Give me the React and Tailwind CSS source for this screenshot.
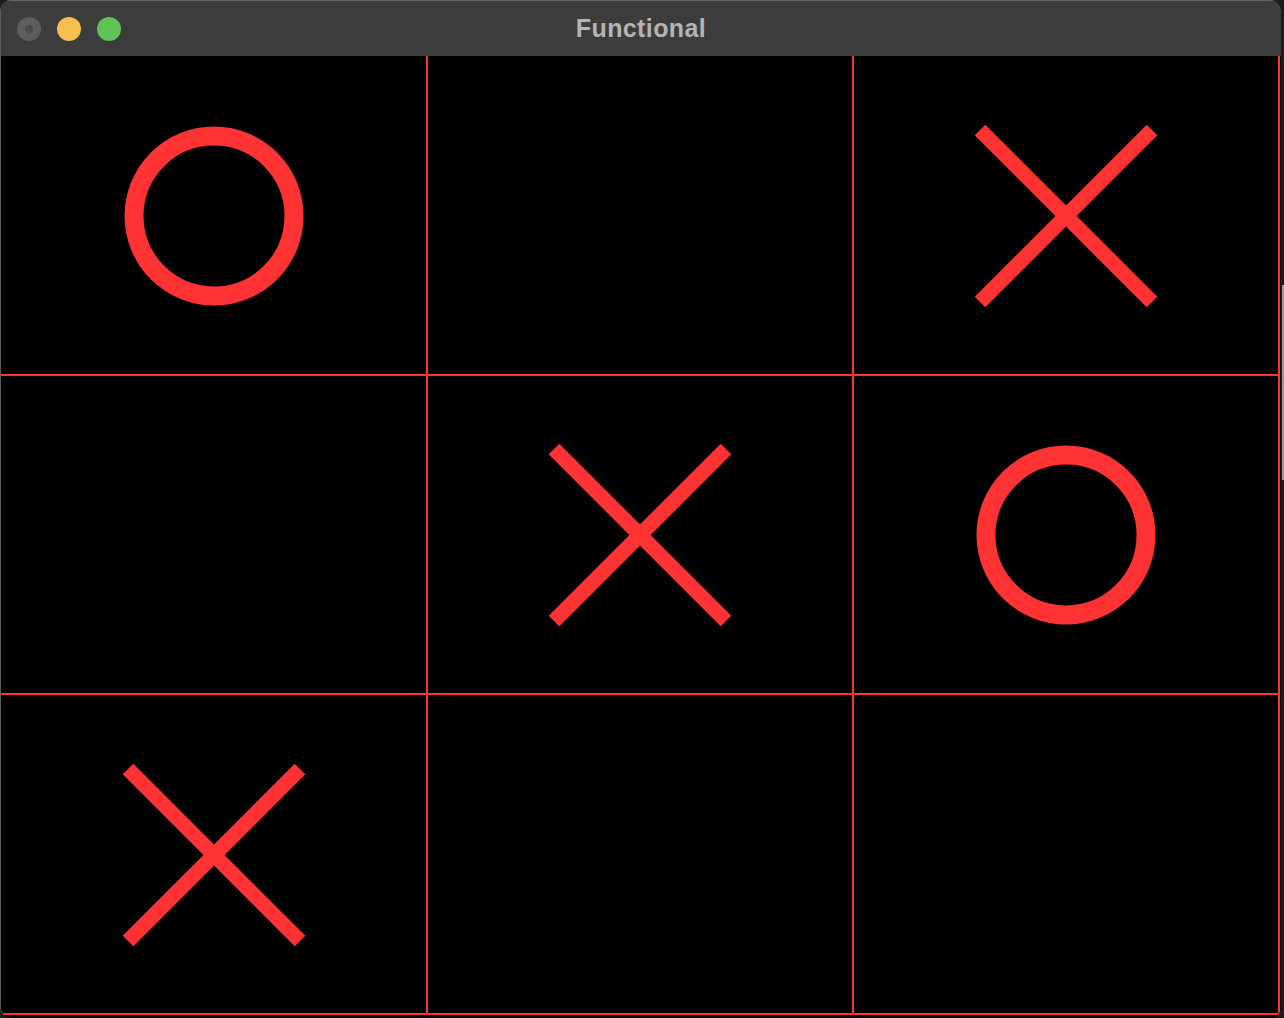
const BOARD = ['O', '', 'X', '', 'X', 'O', 'X', '', '']

function Mark({ value }) {
  if (value === 'O') {
    return (
      <svg width="182" height="182" viewBox="0 0 182 182" className="block">
        <circle cx="91" cy="91" r="80" fill="none" stroke="#ff3333" strokeWidth="19" />
      </svg>
    )
  }
  if (value === 'X') {
    return (
      <svg width="184" height="184" viewBox="0 0 184 184" className="block">
        <g stroke="#ff3333" strokeWidth="15" strokeLinecap="butt">
          <line x1="6" y1="6" x2="178" y2="178" />
          <line x1="178" y1="6" x2="6" y2="178" />
        </g>
      </svg>
    )
  }
  return null
}

function TrafficLights() {
  return (
    <div className="flex items-center gap-4 pl-4">
      <div className="w-6 h-6 rounded-full bg-[#5e5e5e] flex items-center justify-center">
        <div className="w-2 h-2 rounded-full bg-[#4a4a4a]" />
      </div>
      <div className="w-6 h-6 rounded-full bg-[#f6bf4f]" />
      <div className="w-6 h-6 rounded-full bg-[#5fc454]" />
    </div>
  )
}

export default function App() {
  return (
    <div className="w-[1284px] h-[1018px] bg-[#1c1c1c] flex overflow-hidden">
      <div className="w-[1281px] h-full flex flex-col bg-black rounded-[11px] overflow-hidden border-l border-[#5a5a5a]">
        <div className="relative h-[56px] shrink-0 bg-[#3c3c3c] border-t border-[#666] flex items-center">
          <TrafficLights />
          <div className="absolute inset-0 flex items-center justify-center pointer-events-none">
            <span className="text-[25px] font-bold text-[#b4b4b4] tracking-[0.4px]" style={{ fontFamily: '"Liberation Sans", Arial, sans-serif' }}>
              Functional
            </span>
          </div>
        </div>
        <div className="flex-1 grid grid-cols-[427px_426px_426px] grid-rows-[320px_319px_320px] bg-black">
          {BOARD.map((v, i) => (
            <div key={i} className="border-r-2 border-b-2 border-[#ff3333] flex items-center justify-center pt-[1px]">
              <Mark value={v} />
            </div>
          ))}
        </div>
      </div>
      <div className="flex-1 flex flex-col">
        <div className="h-[285px]" />
        <div className="h-[195px] ml-[1px] bg-[#9a9a9a]" />
      </div>
    </div>
  )
}
